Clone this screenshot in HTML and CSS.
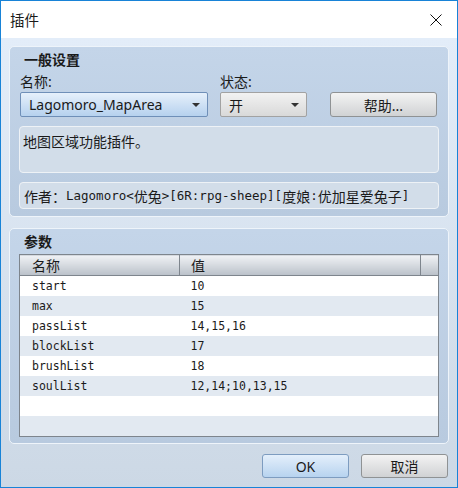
FILE: index.html
```html
<!DOCTYPE html>
<html>
<head>
	<meta charset="utf-8">
	<title>插件</title>
	<link rel="stylesheet" href="styles.css">
</head>
<body>
	<div class="window">
		<div class="titlebar">
			<span class="title">插件</span>
			<svg class="close" width="12" height="12" viewBox="0 0 12 12">
				<path d="M0.5 0.5 L11.5 11.5 M11.5 0.5 L0.5 11.5" stroke="#111" stroke-width="1" fill="none"/>
			</svg>
		</div>

		<div class="content">
			<div class="group general">
				<div class="group-title">一般设置</div>
				<div class="fields">
					<div class="field">
						<label class="field-label">名称:</label>
						<div class="combo combo-active name-combo">
							<span>Lagomoro_MapArea</span>
							<i class="arrow"></i>
						</div>
					</div>
					<div class="field">
						<label class="field-label">状态:</label>
						<div class="combo state-combo">
							<span>开</span>
							<i class="arrow"></i>
						</div>
					</div>
					<button class="btn help-btn">帮助...</button>
				</div>
				<div class="text-box desc">地图区域功能插件。</div>
				<div class="text-box author"><span class="cjk">作者：</span>Lagomoro&lt;<span class="cjk">优兔</span>&gt;[6R:rpg-sheep][<span class="cjk">度娘</span>:<span class="cjk">优加星爱兔子</span>]</div>
			</div>

			<div class="group params">
				<div class="group-title">参数</div>
				<table class="param-table">
					<thead>
						<tr>
							<th class="col-name">名称</th>
							<th class="col-value">值</th>
							<th class="col-rest"></th>
						</tr>
					</thead>
					<tbody id="param-body"></tbody>
				</table>
			</div>

			<div class="buttons">
				<button class="btn btn-default">OK</button>
				<button class="btn">取消</button>
			</div>
		</div>
	</div>

	<script>
		const params = [
			['start', '10'],
			['max', '15'],
			['passList', '14,15,16'],
			['blockList', '17'],
			['brushList', '18'],
			['soulList', '12,14;10,13,15'],
			['', ''],
			['', '']
		];

		const paramBody = document.getElementById('param-body');
		params.forEach(param => {
			const row = document.createElement('tr');
			const nameCell = document.createElement('td');
			const valueCell = document.createElement('td');
			nameCell.textContent = param[0];
			valueCell.textContent = param[1];
			valueCell.colSpan = 2;
			row.appendChild(nameCell);
			row.appendChild(valueCell);
			paramBody.appendChild(row);
		});
	</script>
</body>
</html>
```

FILE: styles.css
```css
body {
	margin: 0;
	font-family: "Noto Sans", "Noto Sans CJK SC", sans-serif;
	font-size: 14px;
	color: #1a1a1a;
}
.window {
	width: 458px;
	height: 488px;
	box-sizing: border-box;
	border: 1px solid #1883d7;
	display: flex;
	flex-direction: column;
}
.titlebar {
	height: 37px;
	flex: none;
	background-color: #fff;
	display: flex;
	align-items: center;
	justify-content: space-between;
	padding: 0 15px 0 9px;
}
.title {
	font-size: 14.5px;
	line-height: 18px;
}
.content {
	flex: 1;
	background: linear-gradient(#e3edf9, #ccd8e5);
	padding: 8px 8px 0 8px;
	display: flex;
	flex-direction: column;
}
.group {
	border: 1px solid #eef4fa;
	border-radius: 5px;
	background: linear-gradient(#c4d5e9, #b8cadf);
	padding: 4px 9px 7px 9px;
}
.group-title {
	font-weight: bold;
	line-height: 18px;
	padding-left: 5px;
}
.fields {
	display: flex;
	align-items: flex-end;
	margin: 5px 0 0 1px;
}
.field {
	display: flex;
	flex-direction: column;
	margin-right: 12px;
}
.field-label {
	line-height: 16px;
	margin-bottom: 2px;
}
.combo {
	height: 25px;
	box-sizing: border-box;
	border: 1px solid #a2a2a2;
	border-radius: 2px;
	background: linear-gradient(#f2f2f2, #d9d9d9);
	display: flex;
	align-items: center;
	justify-content: space-between;
	padding: 0 7px 0 8px;
}
.combo-active {
	border-color: #6f8fb8;
	background: linear-gradient(#e6f0fb, #b6d1ee);
}
.name-combo {
	width: 188px;
}
.state-combo {
	width: 87px;
}
.arrow {
	width: 0;
	height: 0;
	border-left: 4px solid transparent;
	border-right: 4px solid transparent;
	border-top: 4px solid #333;
}
.btn {
	height: 25px;
	box-sizing: border-box;
	border: 1px solid #8f9294;
	border-radius: 3px;
	background: linear-gradient(#f3f3f3, #d0d2d4);
	font-family: inherit;
	font-size: 14px;
	color: #1a1a1a;
	padding: 0;
}
.help-btn {
	width: 107px;
	margin-left: 11px;
}
.text-box {
	border: 1px solid #eef2f6;
	border-radius: 4px;
	background-color: #d2dde9;
	padding: 0 3px;
}
.desc {
	margin-top: 9px;
	padding-top: 6px;
	box-sizing: border-box;
	height: 47px;
	line-height: 18px;
}
.author {
	margin-top: 9px;
	height: 27px;
	box-sizing: border-box;
	display: flex;
	align-items: center;
	padding-left: 4px;
	font-family: "DejaVu Sans Mono", "Noto Sans CJK SC", monospace;
	font-size: 12.5px;
	white-space: pre;
}
.author .cjk {
	font-family: "Noto Sans CJK SC", sans-serif;
	font-size: 14px;
}
.params {
	margin-top: 11px;
	padding-bottom: 6px;
}
.param-table {
	margin-top: 3px;
	width: 420px;
	border-collapse: collapse;
	table-layout: fixed;
	border: 1px solid #7e858d;
	background-color: #fff;
}
.param-table th {
	height: 20px;
	padding: 0;
	font-weight: normal;
	text-align: left;
	line-height: 19px;
	background: linear-gradient(#f0f2f5, #bac1c9);
	border-right: 1px solid #7e858d;
	border-bottom: 1px solid #7e858d;
}
.col-name {
	width: 160px;
	padding-left: 12px !important;
	box-sizing: border-box;
}
.col-value {
	width: 241px;
	padding-left: 11px !important;
	box-sizing: border-box;
}
.param-table td {
	height: 20px;
	padding: 0 0 0 12px;
	font-family: "DejaVu Sans Mono", monospace;
	font-size: 11.5px;
	line-height: 20px;
	white-space: nowrap;
}
.param-table td + td {
	padding-left: 11px;
}
.param-table tbody tr:nth-child(even) {
	background-color: #e2e9f1;
}
.buttons {
	display: flex;
	justify-content: flex-end;
	gap: 12px;
	padding: 10px 1px 0 0;
}
.buttons .btn {
	width: 87px;
	height: 24px;
}
.btn-default {
	border-color: #7d9cc0;
	background: linear-gradient(#e4effb, #b7d3ef);
}
```
